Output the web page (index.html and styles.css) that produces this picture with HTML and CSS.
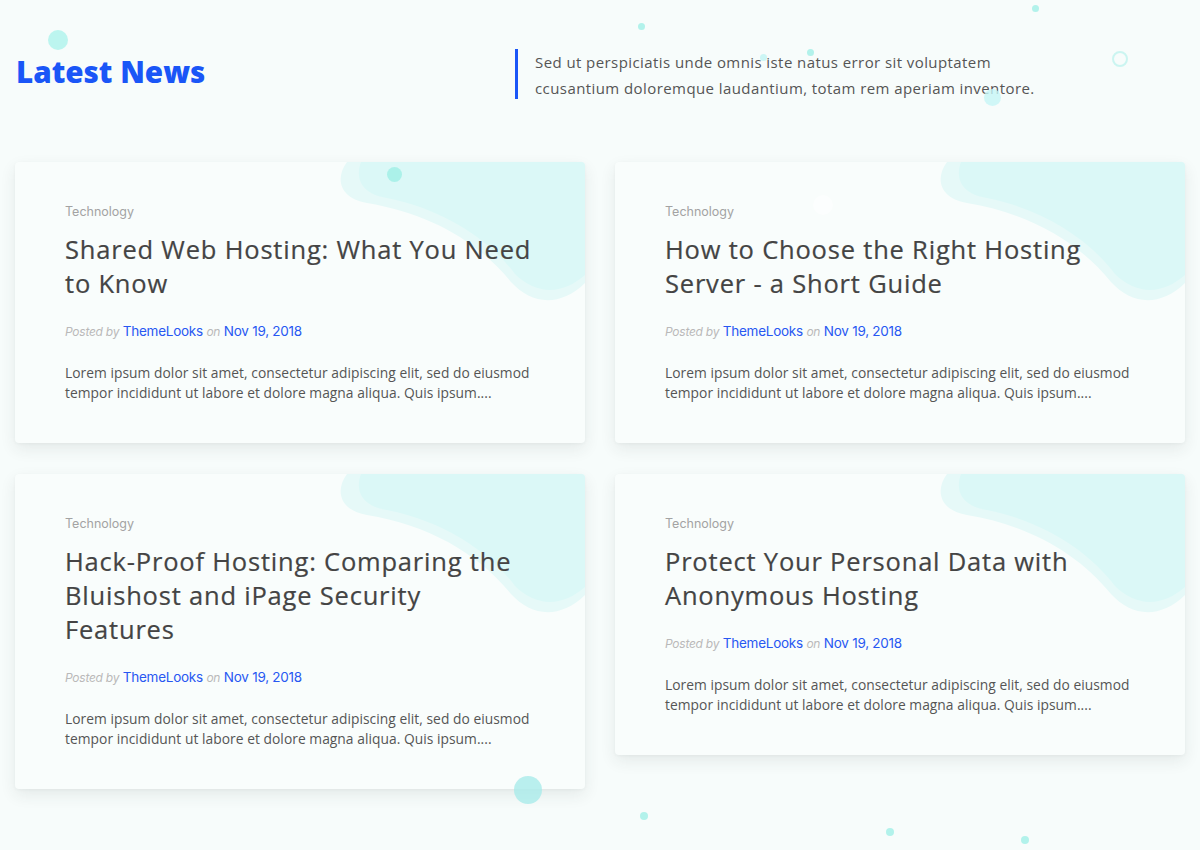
FILE: index.html
```html
<!DOCTYPE html>
<html lang="en">
<head>
<meta charset="utf-8">
<title>Latest News</title>
<link rel="stylesheet" href="styles.css">
</head>
<body>
<div class="bubbles" aria-hidden="true">
  <span class="b b1"></span><span class="b b2"></span><span class="b b3"></span>
  <span class="b b4"></span><span class="b b5"></span><span class="b b6"></span>
  <span class="b ring"></span><span class="b b7"></span><span class="b b8"></span>
  <span class="b b9"></span><span class="b b10"></span><span class="b b11"></span>
  <span class="b b12"></span>
</div>
<section class="news">
  <header class="news-head">
    <h2 class="news-title">Latest News</h2>
    <p class="news-intro">Sed ut perspiciatis unde omnis iste natus error sit voluptatem ccusantium doloremque laudantium, totam rem aperiam inventore.</p>
  </header>
  <div class="grid">
    <article class="card">
      <svg class="blob" viewBox="0 0 250 150" width="250" height="150"><path class="blob-outer" d="M12 0 C0 16 4 36 32 41 C92 51 142 78 176 120 C196 142 224 146 250 121 L250 0 Z"/><path class="blob-inner" d="M26 0 C20 16 26 32 52 36 C112 48 156 80 180 112 C200 132 226 134 250 113 L250 0 Z"/></svg>
      <div class="card-body">
        <div class="cat">Technology</div>
        <h3 class="card-title">Shared Web Hosting: What You Need to Know</h3>
        <div class="meta"><em>Posted by</em> <a href="#">ThemeLooks</a> <em>on</em> <a href="#">Nov 19, 2018</a></div>
        <p class="excerpt">Lorem ipsum dolor sit amet, consectetur adipiscing elit, sed do eiusmod tempor incididunt ut labore et dolore magna aliqua. Quis ipsum....</p>
      </div>
    </article>
    <article class="card">
      <svg class="blob" viewBox="0 0 250 150" width="250" height="150"><path class="blob-outer" d="M12 0 C0 16 4 36 32 41 C92 51 142 78 176 120 C196 142 224 146 250 121 L250 0 Z"/><path class="blob-inner" d="M26 0 C20 16 26 32 52 36 C112 48 156 80 180 112 C200 132 226 134 250 113 L250 0 Z"/></svg>
      <div class="card-body">
        <div class="cat">Technology</div>
        <h3 class="card-title">How to Choose the Right Hosting Server - a Short Guide</h3>
        <div class="meta"><em>Posted by</em> <a href="#">ThemeLooks</a> <em>on</em> <a href="#">Nov 19, 2018</a></div>
        <p class="excerpt">Lorem ipsum dolor sit amet, consectetur adipiscing elit, sed do eiusmod tempor incididunt ut labore et dolore magna aliqua. Quis ipsum....</p>
      </div>
    </article>
    <article class="card">
      <svg class="blob" viewBox="0 0 250 150" width="250" height="150"><path class="blob-outer" d="M12 0 C0 16 4 36 32 41 C92 51 142 78 176 120 C196 142 224 146 250 121 L250 0 Z"/><path class="blob-inner" d="M26 0 C20 16 26 32 52 36 C112 48 156 80 180 112 C200 132 226 134 250 113 L250 0 Z"/></svg>
      <div class="card-body">
        <div class="cat">Technology</div>
        <h3 class="card-title">Hack-Proof Hosting: Comparing the Bluishost and iPage Security Features</h3>
        <div class="meta"><em>Posted by</em> <a href="#">ThemeLooks</a> <em>on</em> <a href="#">Nov 19, 2018</a></div>
        <p class="excerpt">Lorem ipsum dolor sit amet, consectetur adipiscing elit, sed do eiusmod tempor incididunt ut labore et dolore magna aliqua. Quis ipsum....</p>
      </div>
    </article>
    <article class="card">
      <svg class="blob" viewBox="0 0 250 150" width="250" height="150"><path class="blob-outer" d="M12 0 C0 16 4 36 32 41 C92 51 142 78 176 120 C196 142 224 146 250 121 L250 0 Z"/><path class="blob-inner" d="M26 0 C20 16 26 32 52 36 C112 48 156 80 180 112 C200 132 226 134 250 113 L250 0 Z"/></svg>
      <div class="card-body">
        <div class="cat">Technology</div>
        <h3 class="card-title">Protect Your Personal Data with Anonymous Hosting</h3>
        <div class="meta"><em>Posted by</em> <a href="#">ThemeLooks</a> <em>on</em> <a href="#">Nov 19, 2018</a></div>
        <p class="excerpt">Lorem ipsum dolor sit amet, consectetur adipiscing elit, sed do eiusmod tempor incididunt ut labore et dolore magna aliqua. Quis ipsum....</p>
      </div>
    </article>
  </div>
</section>
</body>
</html>
```
FILE: styles.css
```css
* { box-sizing: border-box; }
html, body { margin: 0; padding: 0; }
body {
  background: #f7fcfb;
  font-family: "Open Sans", "Noto Sans", sans-serif;
  color: #555;
  width: 1200px;
  height: 850px;
  overflow: hidden;
  position: relative;
}
.news { padding: 0 15px; position: relative; }
.news-head {
  display: flex;
  align-items: flex-start;
  padding-top: 49px;
  height: 162px;
}
.news-title {
  margin: 0;
  width: 500px;
  padding-top: 3px;
  padding-left: 1px;
  font-family: "Open Sans", sans-serif;
  font-weight: 800;
  font-size: 29.6px;
  line-height: 40px;
  color: #1a56f7;
}
.news-intro {
  margin: 0;
  border-left: 3px solid #1a56f7;
  padding-left: 17px;
  font-size: 15px;
  line-height: 26px;
  letter-spacing: 0.42px;
  color: #555;
  width: 540px;
  height: 50px;
}
.grid {
  display: grid;
  grid-template-columns: 570px 570px;
  column-gap: 30px;
  row-gap: 31px;
  align-items: start;
}
.card {
  position: relative;
  overflow: hidden;
  background: #f9fdfc;
  border-radius: 4px;
  box-shadow: 0 6px 16px rgba(40, 60, 55, 0.09), 0 1px 3px rgba(40, 60, 55, 0.04);
}
.blob { position: absolute; top: 0; right: 0; display: block; }
.blob-outer { fill: #e6f9f8; }
.blob-inner { fill: #dbf8f7; }
.card-body { position: relative; padding: 41px 50px 40px; }
.cat {
  font-family: "Inter", sans-serif;
  font-size: 12.5px;
  color: #a3a3a3;
  line-height: 18px;
}
.card-title {
  margin: 11px 0 0;
  font-family: "Open Sans", sans-serif;
  font-weight: 500;
  font-size: 25.5px;
  letter-spacing: 0.8px;
  line-height: 34px;
  color: #444;
  -webkit-text-stroke: 0.2px #444;
}
.meta {
  margin-top: 21px;
  font-family: "Inter", sans-serif;
  font-size: 13.5px;
  line-height: 20px;
  letter-spacing: -0.25px;
}
.meta em { font-size: 12px; color: #b9b9b9; font-style: italic; }
.meta a { color: #2858f2; text-decoration: none; }
.excerpt {
  margin: 21px 0 0;
  font-size: 13.8px;
  line-height: 20px;
  letter-spacing: 0.04px;
  color: #555;
}
.bubbles { position: absolute; inset: 0; z-index: 5; pointer-events: none; }
.b { position: absolute; border-radius: 50%; background: #a6f0e8; opacity: 0.85; }
.b1 { left: 48px; top: 30px; width: 20px; height: 20px; background: #b2f3ec; }
.b2 { left: 638px; top: 23px; width: 7px; height: 7px; }
.b3 { left: 1032px; top: 5px; width: 7px; height: 7px; }
.b4 { left: 760px; top: 54px; width: 7px; height: 7px; background: #c4f5f3; }
.b5 { left: 807px; top: 49px; width: 7px; height: 7px; }
.b6 { left: 984px; top: 89px; width: 17px; height: 17px; background: #c6f5f6; opacity: 0.8; }
.ring { left: 1112px; top: 51px; width: 16px; height: 16px; background: transparent; border: 2px solid #c3f3ef; }
.b7 { left: 387px; top: 167px; width: 15px; height: 15px; background: #a2f0e6; }
.b8 { left: 514px; top: 776px; width: 28px; height: 28px; background: #a9ebea; opacity: 0.8; }
.b9 { left: 640px; top: 812px; width: 8px; height: 8px; }
.b10 { left: 886px; top: 828px; width: 8px; height: 8px; }
.b11 { left: 1021px; top: 836px; width: 8px; height: 8px; }
.b12 { left: 813px; top: 195px; width: 20px; height: 20px; background: #ffffff; opacity: 0.5; }
```
